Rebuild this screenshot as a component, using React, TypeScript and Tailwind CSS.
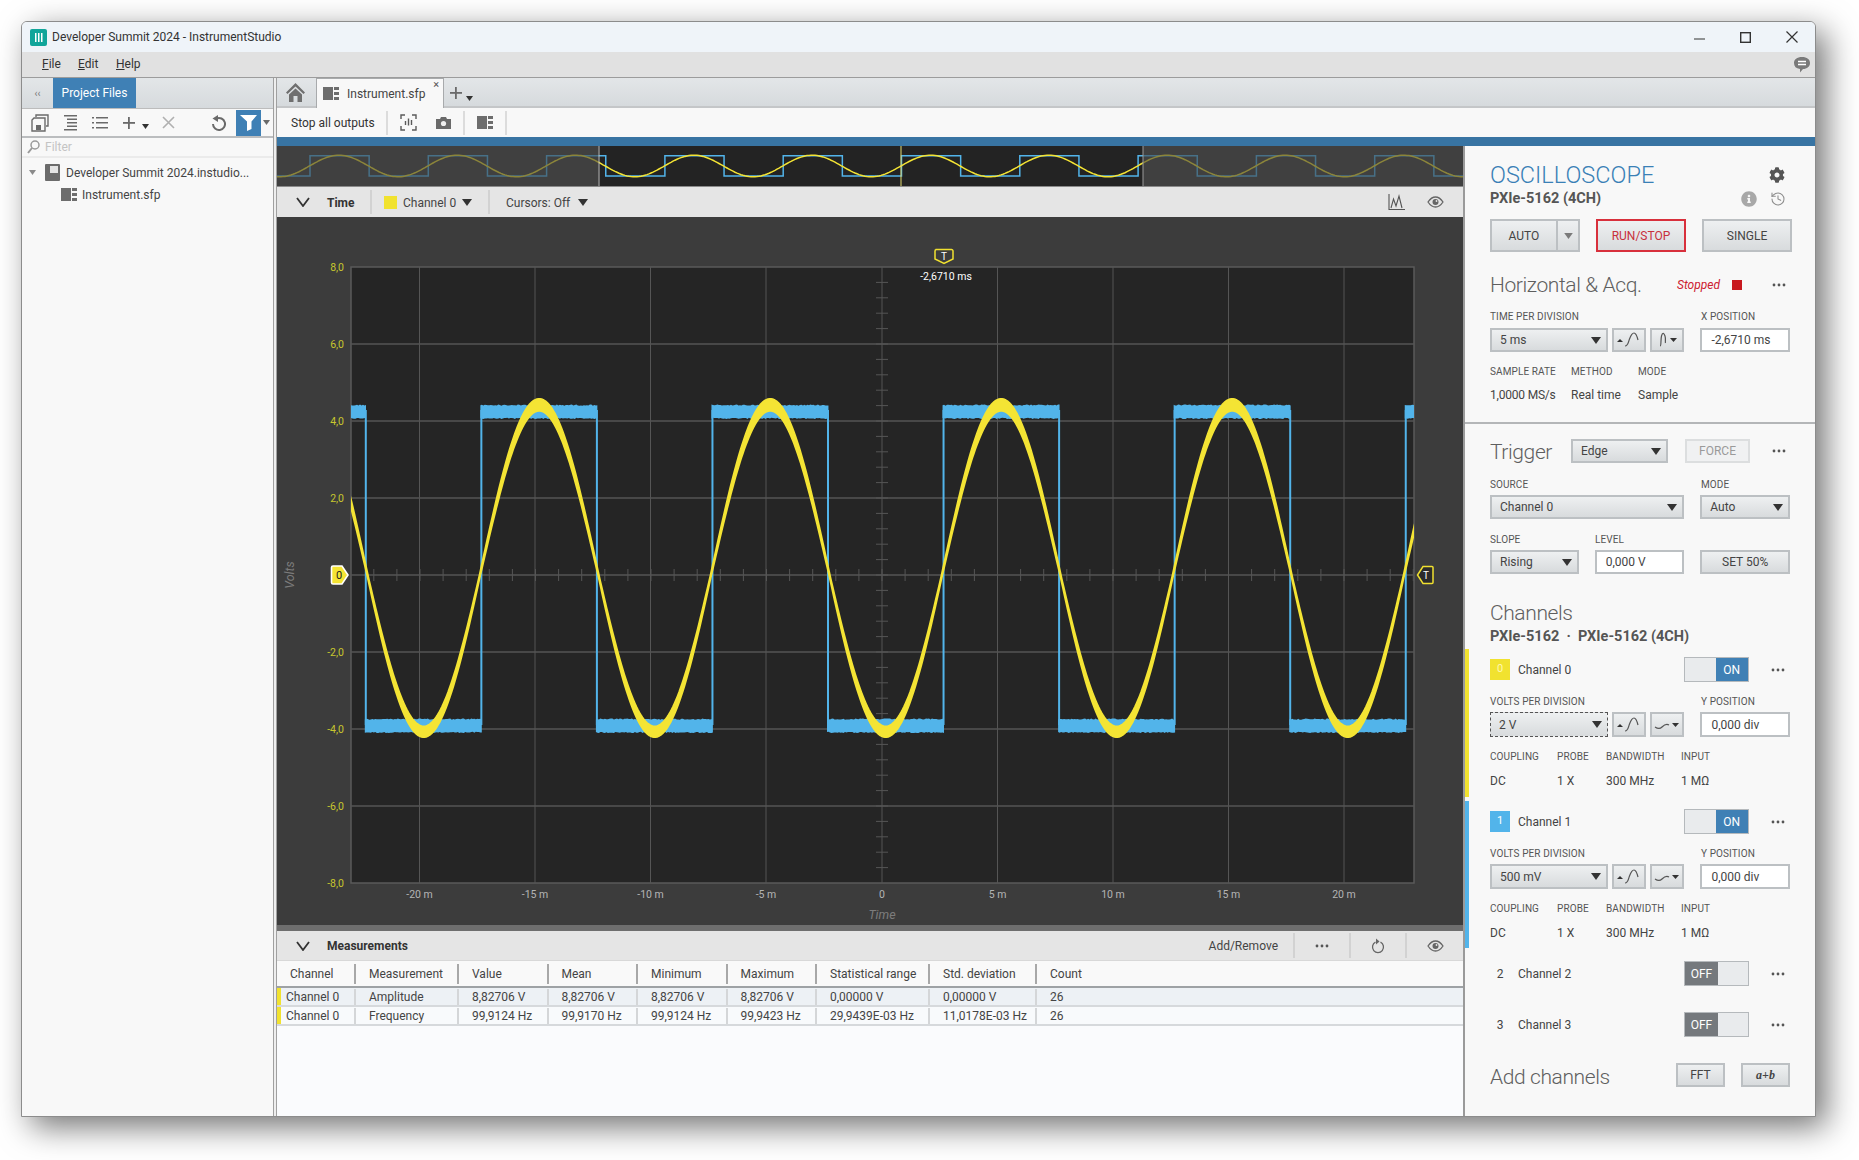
import React from "react";
import { FaCog, FaInfoCircle } from "react-icons/fa";
import { History } from "lucide-react";

const gridLinesX = [419.5, 535, 650.5, 766, 882, 997.5, 1113, 1228.5, 1344];
const gridLinesY = [344, 421, 498, 575, 652, 729, 806];
const xLabels = ["-20 m", "-15 m", "-10 m", "-5 m", "0", "5 m", "10 m", "15 m", "20 m"];
const yLabels = ["8,0", "6,0", "4,0", "2,0", "", "-2,0", "-4,0", "-6,0", "-8,0"];

let seed = 12345;
function rnd() {
  seed = (seed * 1103515245 + 12345) & 0x7fffffff;
  return seed / 0x7fffffff;
}

function sinePolygon() {
  const up: string[] = [];
  const down: string[] = [];
  for (let x = 345; x <= 1420; x += 1.5) {
    const c = Math.cos((2 * Math.PI * (x - 539.2)) / 231);
    up.push(`${x},${(568 - 168.8 * c).toFixed(1)}`);
    down.unshift(`${x},${(568.6 - 158.2 * c).toFixed(1)}`);
  }
  return `M${up.join("L")}L${down.join("L")}Z`;
}

function band(x1: number, x2: number, top: number, bottom: number) {
  const a: string[] = [];
  const b: string[] = [];
  for (let x = x1; x <= x2; x += 1.5) {
    a.push(`${x},${(top + rnd() * 1.2).toFixed(1)}`);
    b.unshift(`${x},${(bottom - rnd() * 1.2).toFixed(1)}`);
  }
  return `M${a.join("L")}L${b.join("L")}Z`;
}

function squareBands() {
  const segs: string[] = [];
  const edges: number[] = [];
  for (let i = 0; i < 11; i++) edges.push(365.8 + i * 115.55);
  segs.push(band(345, edges[0] + 1, 404.5, 419));
  for (let i = 0; i < 10; i++) {
    const hi = i % 2 === 1;
    segs.push(band(edges[i] - 1, Math.min(edges[i + 1] + 1, 1420), hi ? 404.5 : 718.5, hi ? 419 : 733));
  }
  return { d: segs.join(" "), edges };
}

const SINE = sinePolygon();
const SQUARE = squareBands();

function overviewSine() {
  const p: string[] = [];
  for (let x = 277; x <= 1463; x += 2) {
    const c = Math.cos((2 * Math.PI * (x - 339)) / 118.3);
    p.push(`${x},${(166 - 10.8 * c).toFixed(1)}`);
  }
  return `M${p.join("L")}`;
}
function overviewSquare() {
  let d = "M277,176";
  for (let i = 0; i < 11; i++) {
    const r = 310 + i * 118.3;
    const f = r + 59.15;
    d += `L${r},176L${r},155.7L${f},155.7L${f},176`;
  }
  return d;
}
const OS = overviewSine();
const OQ = overviewSquare();

function Overview() {
  return (
    <svg className="block w-full h-[41px] shrink-0" viewBox="277 146 1186 41">
      <rect x="277" y="146" width="1186" height="41" fill="#404040" />
      <rect x="598.6" y="146" width="544.4" height="41" fill="#232323" />
      <defs>
        <clipPath id="mid">
          <rect x="598.6" y="146" width="544.4" height="41" />
        </clipPath>
      </defs>
      <g fill="none" strokeWidth="1.5" opacity="0.42">
        <path d={OQ} stroke="#52b4ea" />
        <path d={OS} stroke="#f4e434" />
      </g>
      <g fill="none" strokeWidth="1.5" clipPath="url(#mid)">
        <rect x="598.6" y="146" width="544.4" height="41" fill="#232323" stroke="none" />
        <path d={OQ} stroke="#52b4ea" />
        <path d={OS} stroke="#f4e434" />
      </g>
      <line x1="599" x2="599" y1="146" y2="186" stroke="#c0c0c0" />
      <line x1="1143" x2="1143" y1="146" y2="186" stroke="#9a9a9a" />
      <line x1="901" x2="901" y1="146" y2="186" stroke="#e4dc70" />
      <line x1="277" x2="1463" y1="186.5" y2="186.5" stroke="#8a8a8a" />
    </svg>
  );
}

function Plot() {
  const hTicks: number[] = [];
  for (let i = -22; i <= 23; i++) hTicks.push(882 + i * 23.1);
  const vTicks: number[] = [];
  for (let i = 1; i < 40; i++) vTicks.push(267 + i * 15.4);
  return (
    <svg className="block w-full h-[708px] shrink-0" viewBox="277 217 1186 708" fontFamily="Roboto, sans-serif">
      <rect x="277" y="217" width="1186" height="708" fill="#3c3c3c" />
      <defs>
        <clipPath id="plotclip">
          <rect x="351" y="267" width="1063" height="616" />
        </clipPath>
      </defs>
      <rect x="351" y="267" width="1063" height="616" fill="#252525" stroke="#5a5a5a" strokeWidth="1.5" />
      <g stroke="#555" strokeWidth="1">
        {gridLinesX.map((x) => (
          <line key={x} x1={x} x2={x} y1="267" y2="883" />
        ))}
        {gridLinesY.map((y) => (
          <line key={y} x1="351" x2="1414" y1={y} y2={y} strokeWidth="1.4" />
        ))}
        {hTicks.map((x) => (
          <line key={x} x1={x} x2={x} y1="569" y2="581" />
        ))}
        {vTicks.map((y) => (
          <line key={y} x1="876" x2="888" y1={y} y2={y} />
        ))}
      </g>
      <g clipPath="url(#plotclip)">
        <path d={SQUARE.d} fill="#52b4ea" />
        {SQUARE.edges.map((x) => (
          <line key={x} x1={x} x2={x} y1="410" y2="725" stroke="#52b4ea" strokeWidth="2" />
        ))}
        <path d={SINE} fill="#f4e434" stroke="#f4e434" strokeWidth="2.6" strokeLinejoin="round" />
      </g>
      <g fontSize="10.5" fill="#c8c72e" textAnchor="end">
        {yLabels.map((l, i) =>
          l ? (
            <text key={l} x="344" y={271 + i * 77}>
              {l}
            </text>
          ) : null,
        )}
      </g>
      <g fontSize="10.5" fill="#b4b4b4" textAnchor="middle">
        {xLabels.map((l, i) => (
          <text key={l} x={gridLinesX[i]} y="898">
            {l}
          </text>
        ))}
      </g>
      <text x="882" y="919" fontSize="12.5" fontStyle="italic" fill="#7c7c7c" textAnchor="middle">
        Time
      </text>
      <text x="0" y="0" fontSize="12.5" fontStyle="italic" fill="#7c7c7c" textAnchor="middle" transform="translate(294 575) rotate(-90)">
        Volts
      </text>
      <path d="M935.5,249.5 h16 a1.5,1.5 0 0 1 1.5,1.5 v8 l-9,4.5 l-9,-4.5 v-8 a1.5,1.5 0 0 1 1.5,-1.5z" fill="#3c3c3c" stroke="#f0e030" strokeWidth="1.5" />
      <text x="944" y="260" fontSize="10" fill="#ffffff" textAnchor="middle">
        T
      </text>
      <text x="946" y="280" fontSize="10.5" fill="#ffffff" textAnchor="middle">
        -2,6710 ms
      </text>
      <path d="M333,566 h9 l6,9 l-6,9 h-9 a1.5,1.5 0 0 1 -1.5,-1.5 v-15 a1.5,1.5 0 0 1 1.5,-1.5z" fill="#f4e434" stroke="#ffffff" strokeWidth="1.6" />
      <text x="339" y="579" fontSize="11" fill="#222" textAnchor="middle">
        0
      </text>
      <path d="M1432,566.5 h-9 l-5.5,8.5 l5.5,8.5 h9 a1,1 0 0 0 1,-1 v-15 a1,1 0 0 0 -1,-1z" fill="#2b2b2b" stroke="#f0e030" strokeWidth="1.5" />
      <text x="1426" y="579" fontSize="10" fill="#fff" textAnchor="middle">
        T
      </text>
    </svg>
  );
}

function Chevron() {
  return (
    <svg width="14" height="10" viewBox="0 0 14 10" fill="none" stroke="#333" strokeWidth="1.8">
      <path d="M1 1l6 8 6-8" />
    </svg>
  );
}

function Caret({ c = "#333", w = 10, h = 7 }: { c?: string; w?: number; h?: number }) {
  return (
    <svg width={w} height={h} viewBox="0 0 10 7">
      <path d="M0 0h10L5 7z" fill={c} />
    </svg>
  );
}

function Dots() {
  return (
    <svg width="14" height="4" viewBox="0 0 14 4" fill="#555">
      <circle cx="2" cy="2" r="1.4" />
      <circle cx="7" cy="2" r="1.4" />
      <circle cx="12" cy="2" r="1.4" />
    </svg>
  );
}

function EyeIcon({ className = "" }: { className?: string }) {
  return (
    <svg width="17" height="12" viewBox="0 0 17 12" fill="none" className={className}>
      <path d="M1 6c2-3 4.500-5 7.500-5s5.500 2 7.500 5c-2 3-4.500 5-7.500 5S3 9 1 6z" stroke="#666" strokeWidth="1.3" />
      <circle cx="8.500" cy="6" r="3" fill="#666" />
      <circle cx="9.500" cy="5" r="0.900" fill="#e5e5e5" />
    </svg>
  );
}

function Block({ c = "#6d6d6d" }: { c?: string }) {
  return (
    <svg width="16" height="13" viewBox="0 0 16 13" fill={c}>
      <rect x="0" y="0" width="10" height="13" />
      <rect x="11" y="0" width="5" height="3" />
      <rect x="11" y="5" width="5" height="3" />
      <rect x="11" y="10" width="5" height="3" />
    </svg>
  );
}

function Lab({ children, className = "" }: { children: React.ReactNode; className?: string }) {
  return <div className={`text-[10px] leading-[12px] h-[12px] text-[#555] tracking-[0.1px] ${className}`}>{children}</div>;
}

const btnBase = "border-2 border-[#bcc0c3] bg-gradient-to-b from-[#eef0f1] to-[#d8dbdd]";

function Select({ label, className, dotted }: { label: string; className: string; dotted?: boolean }) {
  return (
    <div
      className={`flex items-center justify-between pl-[8px] pr-[5px] text-[12px] text-[#444] bg-gradient-to-b from-[#eef0f1] to-[#d8dbdd] ${
        dotted ? "border border-dashed border-[#555]" : "border-2 border-[#bcc0c3]"
      } ${className}`}
    >
      <span>{label}</span>
      <Caret />
    </div>
  );
}

function Btn({ label, className }: { label: string; className: string }) {
  return <div className={`flex items-center justify-center text-[12px] text-[#444] ${btnBase} ${className}`}>{label}</div>;
}

function Input({ value, className }: { value: string; className: string }) {
  return <div className={`flex items-center pl-[9px] text-[12px] text-[#444] bg-white border-2 border-[#bcc0c3] ${className}`}>{value}</div>;
}

function ScaleBtn() {
  return (
    <div className={`w-[34px] h-full flex items-center justify-center ${btnBase}`}>
      <svg width="26" height="18" viewBox="0 0 26 18" fill="none">
        <path d="M1 11l3-3 3 3z" fill="#333" />
        <path d="M9 15c3 0 3-3 4.500-7s2.500-6 4.500-6 3 3 4 7" stroke="#555" strokeWidth="1.2" />
      </svg>
    </div>
  );
}
function SteepBtn() {
  return (
    <div className={`w-[34px] h-full flex items-center justify-center ${btnBase}`}>
      <svg width="24" height="18" viewBox="0 0 24 18" fill="none">
        <path d="M5 15c1.500 0 .5-6 1.500-10S9 2 10 5s0 6 .5 7" stroke="#555" strokeWidth="1.2" />
        <path d="M15 7h7l-3.500 4z" fill="#333" />
      </svg>
    </div>
  );
}
function FlatBtn() {
  return (
    <div className={`w-[34px] h-full flex items-center justify-center ${btnBase}`}>
      <svg width="26" height="18" viewBox="0 0 26 18" fill="none">
        <path d="M1 11c3 2 5 2 7 0s4-4 7-2" stroke="#555" strokeWidth="1.2" />
        <path d="M18 7h7l-3.500 4z" fill="#333" />
      </svg>
    </div>
  );
}

function Toggle({ on }: { on?: boolean }) {
  return (
    <div className="w-[65px] h-[25px] flex border border-[#b5b9bc] bg-[#e9ebed] text-[12px] text-white">
      {on ? <div className="w-[31px]" /> : null}
      <div className={`w-[33px] flex items-center justify-center ${on ? "bg-[#3f80b5]" : "bg-[#75797d]"}`}>{on ? "ON" : "OFF"}</div>
    </div>
  );
}

function Heading({ children }: { children: React.ReactNode }) {
  return <div className="text-[21px] leading-[30px] font-light tracking-[-0.4px] whitespace-nowrap text-[#5f5f5f]">{children}</div>;
}

function ChannelBlock({
  num,
  stripe,
  swatch,
  volts,
  dotted,
  className,
}: {
  num: string;
  stripe: string;
  swatch: string;
  volts: string;
  dotted?: boolean;
  className: string;
}) {
  return (
    <div className={`border-l-4 pl-[21px] pr-[25px] pt-[8px] ${stripe} ${className}`}>
      <div className="flex items-center h-[25px]">
        <div className={`w-[20px] h-[21px] flex items-center justify-center text-[11px] ${swatch}`}>{num}</div>
        <div className="ml-[8px] text-[12px] text-[#444] flex-1">Channel {num}</div>
        <Toggle on />
        <div className="w-[41px] flex justify-end pr-[5px]">
          <Dots />
        </div>
      </div>
      <div className="flex mt-[14px]">
        <Lab className="w-[211px]">VOLTS PER DIVISION</Lab>
        <Lab>Y POSITION</Lab>
      </div>
      <div className="flex mt-[4px] h-[25px]">
        <Select label={volts} className="w-[119px]" dotted={dotted} />
        <div className="ml-[4px] flex gap-[4px] h-full">
          <ScaleBtn />
          <FlatBtn />
        </div>
        <Input value="0,000 div" className="ml-[16px] w-[90px]" />
      </div>
      <div className="flex mt-[14px]">
        <Lab className="w-[67px]">COUPLING</Lab>
        <Lab className="w-[49px]">PROBE</Lab>
        <Lab className="w-[75px]">BANDWIDTH</Lab>
        <Lab>INPUT</Lab>
      </div>
      <div className="flex mt-[8px] text-[12px] leading-[20px] text-[#444]">
        <div className="w-[67px]">DC</div>
        <div className="w-[49px]">1 X</div>
        <div className="w-[75px]">300 MHz</div>
        <div>1 MΩ</div>
      </div>
    </div>
  );
}

function OffChannel({ num, className }: { num: string; className: string }) {
  return (
    <div className={`flex items-center h-[25px] pl-[25px] pr-[25px] ${className}`}>
      <div className="w-[20px] text-center text-[12px] text-[#444]">{num}</div>
      <div className="ml-[8px] text-[12px] text-[#444] flex-1">Channel {num}</div>
      <Toggle />
      <div className="w-[41px] flex justify-end pr-[5px]">
        <Dots />
      </div>
    </div>
  );
}

function RightPanel() {
  return (
    <div className="w-[350px] h-[969px] bg-[#f8f8f8] flex flex-col shrink-0 overflow-hidden">
      <div className="px-[25px] shrink-0">
        <div className="mt-[14px] flex items-center justify-between h-[29px]">
          <div className="text-[23.5px] leading-[30px] font-light text-[#3a80b6]">OSCILLOSCOPE</div>
          <FaCog className="mr-[5px] text-[#555]" size={16} />
        </div>
        <div className="flex items-center justify-between h-[20px]">
          <div className="text-[14.5px] font-bold text-[#555]">PXIe-5162 (4CH)</div>
          <div className="flex items-center gap-[13px] mr-[4px]">
            <FaInfoCircle className="text-[#a8a8a8]" size={16} />
            <History className="text-[#8e8e8e]" size={16} strokeWidth={1.6} />
          </div>
        </div>
        <div className="mt-[10px] h-[33px] grid grid-cols-[90px_90px_90px] gap-x-[16px]">
          <div className="flex h-full">
            <Btn label="AUTO" className="w-[68px]" />
            <div className={`w-[22px] border-l-0 flex items-center justify-center ${btnBase}`}>
              <Caret c="#7a7a7a" w={9} h={6} />
            </div>
          </div>
          <div className="flex items-center justify-center text-[12px] text-[#c8303c] border-2 border-[#d8303c] bg-gradient-to-b from-[#eef0f1] to-[#d8dbdd]">RUN/STOP</div>
          <Btn label="SINGLE" className="h-full" />
        </div>
        <div className="mt-[18px] h-[30px] flex items-center">
          <div className="w-[187px]">
            <Heading>Horizontal &amp; Acq.</Heading>
          </div>
          <div className="w-[55px] text-[12px] italic text-[#cc2030]">Stopped</div>
          <div className="w-[10px] h-[10px] bg-[#c8191f]" />
          <div className="ml-[30px]">
            <Dots />
          </div>
        </div>
        <div className="mt-[11px] flex">
          <Lab className="w-[211px]">TIME PER DIVISION</Lab>
          <Lab>X POSITION</Lab>
        </div>
        <div className="mt-[5px] h-[24px] flex">
          <Select label="5 ms" className="w-[119px]" />
          <div className="ml-[4px] flex gap-[4px] h-full">
            <ScaleBtn />
            <SteepBtn />
          </div>
          <Input value="-2,6710 ms" className="ml-[16px] w-[90px]" />
        </div>
        <div className="mt-[14px] flex">
          <Lab className="w-[81px]">SAMPLE RATE</Lab>
          <Lab className="w-[67px]">METHOD</Lab>
          <Lab>MODE</Lab>
        </div>
        <div className="mt-[7px] flex text-[12px] leading-[20px] text-[#444]">
          <div className="w-[81px] tracking-[-0.2px]">1,0000 MS/s</div>
          <div className="w-[67px]">Real time</div>
          <div>Sample</div>
        </div>
      </div>
      <div className="mt-[17px] h-[2px] bg-[#b4b6b8] shrink-0" />
      <div className="px-[25px] shrink-0">
        <div className="mt-[15px] h-[24px] flex items-center">
          <div className="w-[81px] pt-[2px]">
            <Heading>Trigger</Heading>
          </div>
          <Select label="Edge" className="w-[97px] h-[24px]" />
          <div className="ml-[17px] w-[65px] h-[24px] flex items-center justify-center text-[12px] text-[#9a9a9a] border-2 border-[#dcdedf] bg-[#f0f1f2]">FORCE</div>
          <div className="ml-[22px]">
            <Dots />
          </div>
        </div>
        <div className="mt-[16px] flex">
          <Lab className="w-[211px]">SOURCE</Lab>
          <Lab>MODE</Lab>
        </div>
        <div className="mt-[4px] h-[24px] flex">
          <Select label="Channel 0" className="w-[195px]" />
          <Select label="Auto" className="ml-[16px] w-[90px]" />
        </div>
        <div className="mt-[15px] flex">
          <Lab className="w-[105px]">SLOPE</Lab>
          <Lab>LEVEL</Lab>
        </div>
        <div className="mt-[4px] h-[24px] flex">
          <Select label="Rising" className="w-[89px]" />
          <Input value="0,000 V" className="ml-[16px] w-[90px]" />
          <Btn label="SET 50%" className="ml-[16px] w-[90px]" />
        </div>
        <div className="mt-[24px] h-[29px]">
          <Heading>Channels</Heading>
        </div>
        <div className="h-[20px] text-[14.5px] font-bold text-[#555] flex items-center">PXIe-5162 &nbsp;·&nbsp; PXIe-5162 (4CH)</div>
      </div>
      <ChannelBlock num="0" stripe="border-[#f1e22f]" swatch="bg-[#f1e22f] text-[#fff8b0]" volts="2 V" dotted className="mt-[2px] h-[148px] shrink-0" />
      <ChannelBlock num="1" stripe="border-[#52b4ea]" swatch="bg-[#52b4ea] text-white" volts="500 mV" className="mt-[4px] h-[147px] shrink-0" />
      <OffChannel num="2" className="mt-[13px] shrink-0" />
      <OffChannel num="3" className="mt-[26px] shrink-0" />
      <div className="mt-[26px] px-[25px] flex items-center h-[24px] shrink-0">
        <div className="flex-1 pt-[4px]">
          <Heading>Add channels</Heading>
        </div>
        <Btn label="FFT" className="w-[49px] h-[24px]" />
        <div className={`ml-[16px] w-[49px] h-[24px] flex items-center justify-center text-[12px] font-bold italic font-[Liberation_Serif,serif] text-[#444] ${btnBase}`}>a+b</div>
      </div>
    </div>
  );
}

const cols = [
  { w: "w-[79px]", h: "Channel" },
  { w: "w-[103px]", h: "Measurement" },
  { w: "w-[89.500px]", h: "Value" },
  { w: "w-[89.500px]", h: "Mean" },
  { w: "w-[89.500px]", h: "Minimum" },
  { w: "w-[89.500px]", h: "Maximum" },
  { w: "w-[113px]", h: "Statistical range" },
  { w: "w-[107px]", h: "Std. deviation" },
  { w: "flex-1", h: "Count" },
];
const rows = [
  ["Channel 0", "Amplitude", "8,82706 V", "8,82706 V", "8,82706 V", "8,82706 V", "0,00000 V", "0,00000 V", "26"],
  ["Channel 0", "Frequency", "99,9124 Hz", "99,9170 Hz", "99,9124 Hz", "99,9423 Hz", "29,9439E-03 Hz", "11,0178E-03 Hz", "26"],
];

function Table() {
  return (
    <div className="flex-1 bg-[#fafbfd] flex flex-col text-[12px] text-[#444]">
      <div className="h-[27px] shrink-0 flex items-center bg-[#f9f9f9] border-b-2 border-[#9ea2a5] box-border">
        {cols.map((c, i) => (
          <div key={c.h} className={`${c.w} h-[20px] flex items-center pl-[13px] ${i < 8 ? "border-r-2 border-[#a8a8a8]" : ""}`}>
            {c.h}
          </div>
        ))}
      </div>
      {rows.map((r, ri) => (
        <div key={r[1]} className={`h-[19px] shrink-0 flex items-center border-b-2 border-[#d6d9dc] ${ri === 0 ? "bg-[#edf1f5]" : "bg-[#f8fafc]"}`}>
          <div className="w-[4px] h-full bg-[#f1e22f] shrink-0" />
          {cols.map((c, i) => (
            <div
              key={c.h}
              className={`${i === 0 ? "w-[75px] pl-[5px]" : c.w + " pl-[13px]"} h-[16px] flex items-center ${i < 8 ? "border-r-2 border-[#d4d6d8]" : ""}`}
            >
              {r[i]}
            </div>
          ))}
        </div>
      ))}
    </div>
  );
}

function HouseIcon() {
  return (
    <svg width="21" height="21" viewBox="0 0 21 21" fill="#6f6f6f">
      <path d="M10.500 1L1 10.500l1.500 1.500 8-7.500 8 7.500 1.500-1.500z" />
      <path d="M4 12.500l6.500-6 6.500 6V20h-4.500v-6h-4v6H4z" />
    </svg>
  );
}

function ToolIcons() {
  return (
    <>
      <svg width="18" height="18" viewBox="0 0 18 18" fill="none" stroke="#6a6a6a" strokeWidth="1.4" className="ml-[9px] shrink-0">
        <path d="M5 3V1h12v11h-2" />
        <path d="M3 4h11v13H1V6z" />
        <rect x="5" y="11" width="5" height="5" fill="#6a6a6a" stroke="none" />
      </svg>
      <svg width="16" height="16" viewBox="0 0 16 16" fill="#6a6a6a" className="ml-[13px] shrink-0">
        <rect x="2" y="0" width="13" height="1.500" />
        <rect x="5" y="3.500" width="10" height="1.500" />
        <rect x="5" y="7" width="10" height="1.500" />
        <rect x="5" y="10.500" width="10" height="1.500" />
        <rect x="2" y="14" width="13" height="1.500" />
      </svg>
      <svg width="16" height="14" viewBox="0 0 16 14" fill="#6a6a6a" className="ml-[14px] shrink-0">
        <rect x="0" y="1" width="2" height="1.500" />
        <rect x="4" y="1" width="12" height="1.500" />
        <rect x="0" y="6" width="2" height="1.500" />
        <rect x="4" y="6" width="12" height="1.500" />
        <rect x="0" y="11" width="2" height="1.500" />
        <rect x="4" y="11" width="12" height="1.500" />
      </svg>
      <svg width="12" height="12" viewBox="0 0 12 12" fill="#6a6a6a" className="ml-[15px] shrink-0">
        <rect x="5" y="0" width="1.800" height="12" />
        <rect x="0" y="5" width="12" height="1.800" />
      </svg>
      <div className="ml-[7px] mt-[8px] shrink-0">
        <Caret c="#333" w={7} h={5} />
      </div>
      <svg width="13" height="13" viewBox="0 0 13 13" stroke="#b0b0b0" strokeWidth="1.6" className="ml-[13px] shrink-0">
        <path d="M1 1l11 11M12 1L1 12" />
      </svg>
      <svg width="16" height="16" viewBox="0 0 16 16" fill="none" className="ml-[36px] shrink-0">
        <path d="M5.500 3.500a6 6 0 1 1-3.500 5.500" stroke="#6a6a6a" strokeWidth="2" />
        <path d="M7 0v7L1.500 3.500z" fill="#6a6a6a" />
      </svg>
      <div className="ml-[9px] w-[25px] h-[26px] bg-[#3f80b5] flex items-center justify-center shrink-0">
        <svg width="17" height="17" viewBox="0 0 17 17" fill="#fff">
          <path d="M0 1h17l-5.500 6.500V15l-4.500 2V7.500z" />
        </svg>
      </div>
      <div className="ml-[2px] shrink-0">
        <Caret c="#6a6a6a" w={7} h={5} />
      </div>
    </>
  );
}

function LeftPanel() {
  return (
    <div className="w-[251px] h-full flex flex-col bg-[#f8f8f8] shrink-0 text-[12px] text-[#444]">
      <div className="h-[31px] shrink-0 flex bg-gradient-to-b from-[#e3e6e8] to-[#d6dadd] border-b border-[#bcbcbc]">
        <div className="w-[31px] flex items-center justify-center text-[10px] text-[#777]">‹‹</div>
        <div className="w-[83px] bg-[#3f80b5] text-white flex items-center justify-center text-[12px]">Project Files</div>
      </div>
      <div className="h-[29px] shrink-0 flex items-center border-b-2 border-[#bbbdbf] bg-[#f8f8f8]">
        <ToolIcons />
      </div>
      <div className="h-[20px] shrink-0 flex items-center border-b-2 border-[#ebebeb] pl-[5px]">
        <svg width="13" height="14" viewBox="0 0 13 14" fill="none" stroke="#9a9a9a" strokeWidth="1.5">
          <circle cx="8" cy="5" r="4" />
          <path d="M5 8l-4 5" strokeWidth="2" />
        </svg>
        <span className="ml-[5px] text-[#c4c4c4]">Filter</span>
      </div>
      <div className="mt-[4px] h-[21px] flex items-center pl-[7px]">
        <Caret c="#8a8a8a" w={7} h={5} />
        <svg width="15" height="17" viewBox="0 0 15 17" className="ml-[9px] shrink-0">
          <rect x="0" y="0" width="15" height="17" rx="1" fill="#6b6b6b" />
          <rect x="5" y="2" width="8" height="7" fill="#e4e4e4" />
        </svg>
        <span className="ml-[6px] whitespace-nowrap">Developer Summit 2024.instudio...</span>
      </div>
      <div className="mt-[1px] h-[21px] flex items-center pl-[39px]">
        <Block />
        <span className="ml-[5px]">Instrument.sfp</span>
      </div>
    </div>
  );
}

export default function App() {
  return (
    <div className="w-[1859px] h-[1160px] bg-white pt-[21px] pl-[21px] font-[Roboto,sans-serif] overflow-hidden">
      <div className="w-[1795px] h-[1096px] flex flex-col border border-[#8c8c8c] rounded-t-[6px] shadow-[10px_10px_32px_rgba(0,0,0,0.55)] bg-[#f8f8f8] overflow-hidden">
        <div className="h-[30px] shrink-0 flex items-center bg-[#eff4f9]">
          <svg width="17" height="17" viewBox="0 0 17 17" className="ml-[8px] shrink-0">
            <rect width="17" height="17" rx="2" fill="#11a59a" />
            <path d="M5 4h1.500v9H5zM8 4h1.500v9H8zM11 4h1.500v9H11z" fill="#fff" />
          </svg>
          <div className="ml-[5px] text-[12px] text-[#333] flex-1">Developer Summit 2024 - InstrumentStudio</div>
          <svg width="11" height="11" viewBox="0 0 11 11" stroke="#333" strokeWidth="1.2" fill="none">
            <path d="M0 7h11" />
          </svg>
          <svg width="11" height="11" viewBox="0 0 11 11" stroke="#333" strokeWidth="1.4" fill="none" className="ml-[35px]">
            <rect x="0.700" y="0.700" width="9.600" height="9.600" />
          </svg>
          <svg width="12" height="12" viewBox="0 0 12 12" stroke="#333" strokeWidth="1.2" fill="none" className="ml-[35px] mr-[17px]">
            <path d="M0.500 0.500l11 11M11.500 0.500l-11 11" />
          </svg>
        </div>
        <div className="h-[26px] shrink-0 flex items-center bg-[#e1e1e1] border-b border-[#9c9c9c] text-[12px] text-[#333] pl-[20px]">
          <span className="w-[36px] pb-[2px]">
            <u>F</u>ile
          </span>
          <span className="w-[38px] pb-[2px]">
            <u>E</u>dit
          </span>
          <span className="flex-1 pb-[2px]">
            <u>H</u>elp
          </span>
          <svg width="18" height="18" viewBox="0 0 18 18" className="mr-[4px]">
            <path d="M9 1c5 0 8 2.500 8 6s-3 6-7 6l-3 3.500V13C3 12.500 1 10.500 1 7c0-3.500 3-6 8-6z" fill="#7a7a7a" />
            <path d="M5 5.500h8M5 8.500h8" stroke="#fff" strokeWidth="1.300" />
          </svg>
        </div>
        <div className="flex-1 flex min-h-0">
          <LeftPanel />
          <div className="w-[4px] shrink-0 bg-[#eeeeee] border-x border-[#a0a0a0]" />
          <div className="flex-1 flex flex-col min-w-0">
            <div className="h-[30px] shrink-0 flex bg-gradient-to-b from-[#e3e6e8] to-[#d6dadd] border-b-2 border-[#c4c6c8] text-[12px] text-[#444]">
              <div className="w-[39px] flex items-center justify-center pr-[2px]">
                <HouseIcon />
              </div>
              <div className="w-[128px] h-[30px] relative flex items-center pl-[6px] bg-[#f8f8f8] border-x border-t border-[#a8aaac]">
                <Block />
                <span className="ml-[8px]">Instrument.sfp</span>
                <span className="absolute right-[4px] top-[-1px] text-[11px] leading-[14px] text-[#555]">×</span>
              </div>
              <svg width="14" height="14" viewBox="0 0 14 14" fill="#6a6a6a" className="ml-[5px] mt-[8px]">
                <rect x="6" y="1" width="1.800" height="12" />
                <rect x="1" y="6" width="12" height="1.800" />
              </svg>
              <div className="ml-[3px] mt-[18px]">
                <Caret c="#333" w={7} h={5} />
              </div>
            </div>
            <div className="h-[29px] shrink-0 flex items-center bg-[#f8f8f8] text-[12px] text-[#333]">
              <div className="w-[111px] h-[24px] flex items-center pl-[14px] border-r-2 border-[#dcdcdc]">Stop all outputs</div>
              <div className="w-[77px] h-[24px] flex items-center border-r-2 border-[#dcdcdc]">
                <svg width="17" height="17" viewBox="0 0 17 17" fill="none" stroke="#5a5a5a" strokeWidth="1.400" className="ml-[12px]">
                  <path d="M1 5V1h4M12 1h4v4M16 12v4h-4M5 16H1v-4" />
                  <path d="M5.500 7v4M8.500 4.500v7M11.500 6v5" />
                </svg>
                <svg width="15" height="12" viewBox="0 0 15 12" className="ml-[19px]">
                  <path d="M0 2h4l1-2h5l1 2h4v10H0z" fill="#6a6a6a" />
                  <circle cx="7.500" cy="6.500" r="2.600" fill="#f0f0f0" />
                </svg>
              </div>
              <div className="w-[42px] h-[24px] flex items-center justify-center border-r-2 border-[#dcdcdc]">
                <Block />
              </div>
            </div>
            <div className="h-[9px] shrink-0 bg-[#3874a3]" />
            <div className="flex-1 flex min-h-0">
              <div className="w-[1186px] shrink-0 flex flex-col">
                <Overview />
                <div className="h-[30px] shrink-0 flex items-center bg-[#e5e5e5] text-[12px] text-[#444]">
                  <div className="w-[95px] h-[24px] flex items-center pl-[19px] border-r-2 border-[#d2d2d2]">
                    <Chevron />
                    <span className="ml-[17px] pt-[1px] font-bold text-[#333]">Time</span>
                  </div>
                  <div className="w-[118px] h-[24px] flex items-center pl-[12px] border-r-2 border-[#d2d2d2]">
                    <div className="w-[13px] h-[13px] bg-[#f1e22f]" />
                    <span className="ml-[6px] pt-[1px]">Channel 0</span>
                    <div className="ml-[6px]">
                      <Caret />
                    </div>
                  </div>
                  <span className="ml-[16px] pt-[1px]">Cursors: Off</span>
                  <div className="ml-[8px] flex-1">
                    <Caret />
                  </div>
                  <svg width="18" height="18" viewBox="0 0 18 18" fill="none" stroke="#555" strokeWidth="1.100" className="mr-[21px]">
                    <path d="M1 1v15.500h16" />
                    <path d="M3 15l2.500-9 2.500 7 3-10 3 12" />
                  </svg>
                  <EyeIcon className="mr-[19px]" />
                </div>
                <Plot />
                <div className="h-[6px] shrink-0 bg-[#6e6e6e]" />
                <div className="h-[30px] shrink-0 flex items-center bg-[#e5e5e5] text-[12px] text-[#444] border-b border-[#d8d8d8]">
                  <div className="pl-[19px] flex items-center flex-1">
                    <Chevron />
                    <span className="ml-[17px] font-bold text-[#333]">Measurements</span>
                  </div>
                  <div className="pr-[15px] h-[25px] flex items-center border-r-2 border-[#d2d2d2]">Add/Remove</div>
                  <div className="w-[56px] h-[25px] flex items-center justify-center border-r-2 border-[#d2d2d2]">
                    <Dots />
                  </div>
                  <div className="w-[56px] h-[25px] flex items-center justify-center border-r-2 border-[#d2d2d2]">
                    <svg width="14" height="16" viewBox="0 0 14 16" fill="none">
                      <path d="M9.500 4.200a5.500 5.500 0 1 1-5 0" stroke="#666" strokeWidth="1.300" />
                      <path d="M5 0.500v6l3.500-3z" fill="#666" />
                    </svg>
                  </div>
                  <div className="w-[56px] flex items-center justify-center">
                    <EyeIcon />
                  </div>
                </div>
                <Table />
              </div>
              <div className="w-[2px] shrink-0 bg-[#9a9a9a]" />
              <RightPanel />
            </div>
          </div>
        </div>
      </div>
    </div>
  );
}
